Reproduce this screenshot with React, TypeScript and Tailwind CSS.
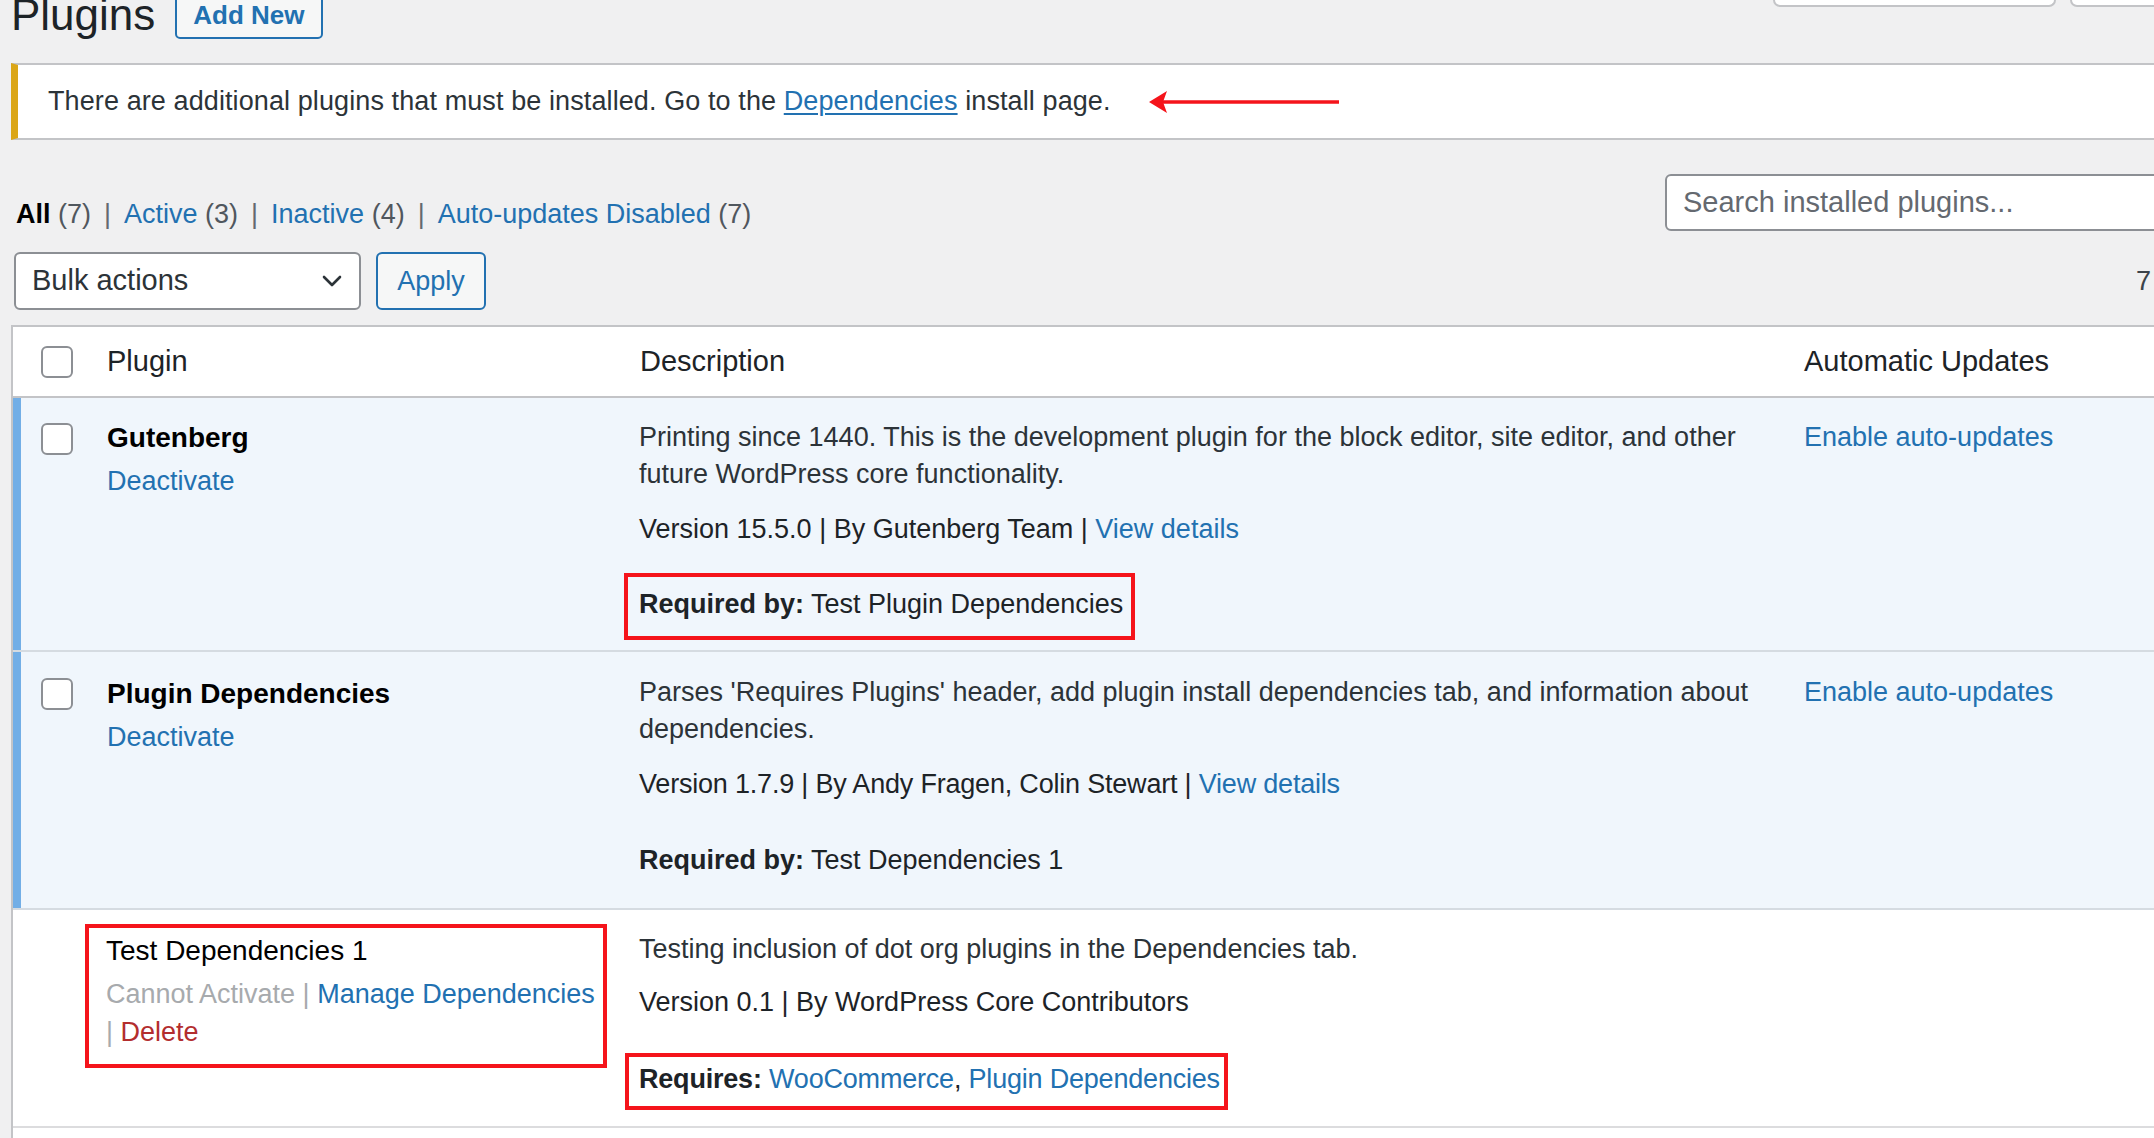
import React from "react";

function Checkbox() {
  return (
    <span className="block h-[32px] w-[32px] rounded-[6px] border-2 border-[#8c8f94] bg-white" />
  );
}

// red annotation frame drawn over the screenshot
function Mark({ className }: { className: string }) {
  return (
    <span
      className={
        "pointer-events-none absolute border-[4px] border-[#f5141b] " +
        className
      }
    />
  );
}

function Sep() {
  return <span className="mx-[13px] text-[#646970]">|</span>;
}

export default function App() {
  return (
    <div className="h-[1138px] w-[2154px] overflow-hidden bg-[#f0f0f1] font-['Liberation_Sans',Arial,sans-serif] text-[#1d2327]">
      <div className="pl-[11px]">
        {/* title row */}
        <div className="flex items-start justify-between">
          <div className="-mt-[13px] flex items-center gap-[20px]">
            <h1 className="text-[44px] leading-[56px] text-[#1d2327]">
              Plugins
            </h1>
            <button className="h-[48px] rounded-[5px] border-2 border-[#2271b1] bg-[#f6f7f7] px-[16px] text-[26px] font-bold text-[#2271b1]">
              Add New
            </button>
          </div>
          <div className="-mr-[36px] flex gap-[14px]">
            <div className="h-[7px] w-[283px] rounded-b-[8px] border-2 border-t-0 border-[#c3c4c7] bg-white" />
            <div className="h-[7px] w-[120px] rounded-b-[8px] border-2 border-t-0 border-[#c3c4c7] bg-white" />
          </div>
        </div>

        {/* notice */}
        <div className="-mr-[10px] mt-[20px] flex h-[77px] items-center border-y-2 border-l-[7px] border-[#c3c4c7] border-l-[#dba617] bg-white pl-[30px] text-[27px] tracking-[0.1px] text-[#2c3338]">
          <span>
            There are additional plugins that must be installed. Go to the{" "}
            <a className="text-[#2271b1] underline underline-offset-[3px]">
              Dependencies
            </a>{" "}
            install page.
          </span>
          <svg
            width="190"
            height="24"
            viewBox="0 0 190 24"
            className="ml-[38px]"
          >
            <line
              x1="13"
              y1="12"
              x2="190"
              y2="12"
              stroke="#f5141b"
              strokeWidth="3.5"
            />
            <polygon points="0,12 18,1 14,12 18,23" fill="#f5141b" />
          </svg>
        </div>

        {/* filters + search */}
        <div className="mt-[34px] flex items-start justify-between">
          <div className="pl-[5px] pt-[22px] text-[27px] leading-[36px] text-[#50575e]">
            <span className="font-bold text-black">All</span> (7)
            <Sep />
            <a className="text-[#2271b1]">Active</a> (3)
            <Sep />
            <a className="text-[#2271b1]">Inactive</a> (4)
            <Sep />
            <a className="text-[#2271b1]">Auto-updates Disabled</a> (7)
          </div>
          <div className="-mr-[41px] flex h-[57px] w-[530px] items-center rounded-[6px] border-2 border-[#8c8f94] bg-white pl-[16px] text-[29px] text-[#646970]">
            Search installed plugins...
          </div>
        </div>

        {/* bulk actions */}
        <div className="mt-[20px] flex h-[58px] items-center">
          <div className="ml-[3px] flex h-[58px] w-[347px] items-center justify-between rounded-[6px] border-2 border-[#8c8f94] bg-white pl-[16px] pr-[14px] text-[29px] text-[#2c3338]">
            <span>Bulk actions</span>
            <svg width="26" height="26" viewBox="0 0 26 26">
              <polyline
                points="5,9 13,17 21,9"
                fill="none"
                stroke="#2c3338"
                strokeWidth="2.6"
                strokeLinecap="round"
                strokeLinejoin="round"
              />
            </svg>
          </div>
          <button className="ml-[15px] h-[58px] w-[110px] rounded-[6px] border-2 border-[#2271b1] bg-[#f6f7f7] text-[27px] text-[#2271b1]">
            Apply
          </button>
          <span className="-mr-[69px] ml-auto whitespace-nowrap text-[27px] text-[#3c434a]">
            7 items
          </span>
        </div>

        {/* plugin table */}
        <div className="-mr-[20px] mt-[15px] border-l-2 border-t-2 border-[#c3c4c7] bg-white">
          <div className="grid h-[71px] grid-cols-[74px_533px_1164px_1fr] items-center border-b-2 border-[#c3c4c7] text-[29px] text-[#1d2327]">
            <div className="pl-[28px]">
              <Checkbox />
            </div>
            <div className="pl-[20px]">Plugin</div>
            <div className="pl-[20px]">Description</div>
            <div className="pl-[20px]">Automatic Updates</div>
          </div>

          {/* Gutenberg */}
          <div className="grid grid-cols-[74px_533px_1164px_1fr] border-b-2 border-[#d5dbe1] bg-[#f0f6fc] text-[27px] leading-[37px]">
            <div className="pl-[28px] pt-[25px] shadow-[inset_8px_0_0_0_#72aee6]">
              <Checkbox />
            </div>
            <div className="pl-[20px] pt-[21px]">
              <div className="text-[28px] font-bold text-black">Gutenberg</div>
              <div className="mt-[7px] text-[#2271b1]">Deactivate</div>
            </div>
            <div className="pb-[27px] pl-[19px] pr-[20px] pt-[21px]">
              <p className="mb-[18px] text-[#2c3338]">
                Printing since 1440. This is the development plugin for the
                block editor, site editor, and other future WordPress core
                functionality.
              </p>
              <div>
                Version 15.5.0 | By Gutenberg Team |{" "}
                <a className="text-[#2271b1]">View details</a>
              </div>
              <div className="mt-[38px]">
                <span className="relative inline-block">
                  <b>Required by:</b> Test Plugin Dependencies
                  <Mark className="-left-[15px] -top-[13px] h-[67px] w-[511px]" />
                </span>
              </div>
            </div>
            <div className="pl-[20px] pt-[21px] text-[#2271b1]">
              Enable auto-updates
            </div>
          </div>

          {/* Plugin Dependencies */}
          <div className="grid grid-cols-[74px_533px_1164px_1fr] border-b-2 border-[#d5dbe1] bg-[#f0f6fc] text-[27px] leading-[37px]">
            <div className="pl-[28px] pt-[26px] shadow-[inset_8px_0_0_0_#72aee6]">
              <Checkbox />
            </div>
            <div className="pl-[20px] pt-[23px]">
              <div className="text-[28px] font-bold text-black">
                Plugin Dependencies
              </div>
              <div className="mt-[7px] text-[#2271b1]">Deactivate</div>
            </div>
            <div className="pb-[29px] pl-[19px] pr-[20px] pt-[22px]">
              <p className="mb-[18px] text-[#2c3338]">
                Parses 'Requires Plugins' header, add plugin install
                dependencies tab, and information about dependencies.
              </p>
              <div className="tracking-[-0.2px]">
                Version 1.7.9 | By Andy Fragen, Colin Stewart |{" "}
                <a className="text-[#2271b1]">View details</a>
              </div>
              <div className="mt-[39px]">
                <b>Required by:</b> Test Dependencies 1
              </div>
            </div>
            <div className="pl-[20px] pt-[22px] text-[#2271b1]">
              Enable auto-updates
            </div>
          </div>

          {/* Test Dependencies 1 */}
          <div className="grid grid-cols-[74px_533px_1164px_1fr] border-b-2 border-[#dcdcde] text-[27px] leading-[37px]">
            <div />
            <div className="pl-[19px] pt-[22px]">
              <div className="relative">
                <div className="text-[28px] text-black">
                  Test Dependencies 1
                </div>
                <div className="mt-[6px] whitespace-nowrap leading-[38px] text-[#a7aaad]">
                  Cannot Activate |{" "}
                  <a className="text-[#2271b1]">Manage Dependencies</a>
                </div>
                <div className="leading-[38px] text-[#a7aaad]">
                  | <a className="text-[#b32d2e]">Delete</a>
                </div>
                <Mark className="-left-[21px] -top-[8px] h-[144px] w-[522px]" />
              </div>
            </div>
            <div className="pb-[28px] pl-[19px] pr-[20px] pt-[21px]">
              <p className="mb-[16px] text-[#2c3338]">
                Testing inclusion of dot org plugins in the Dependencies tab.
              </p>
              <div>Version 0.1 | By WordPress Core Contributors</div>
              <div className="mt-[40px]">
                <span className="relative inline-block tracking-[-0.2px]">
                  <b>Requires:</b>{" "}
                  <a className="text-[#2271b1]">WooCommerce</a>,{" "}
                  <a className="text-[#2271b1]">Plugin Dependencies</a>
                  <Mark className="-left-[14px] -top-[8px] h-[57px] w-[603px]" />
                </span>
              </div>
            </div>
            <div />
          </div>
          <div className="h-[40px]" />
        </div>
      </div>
    </div>
  );
}
